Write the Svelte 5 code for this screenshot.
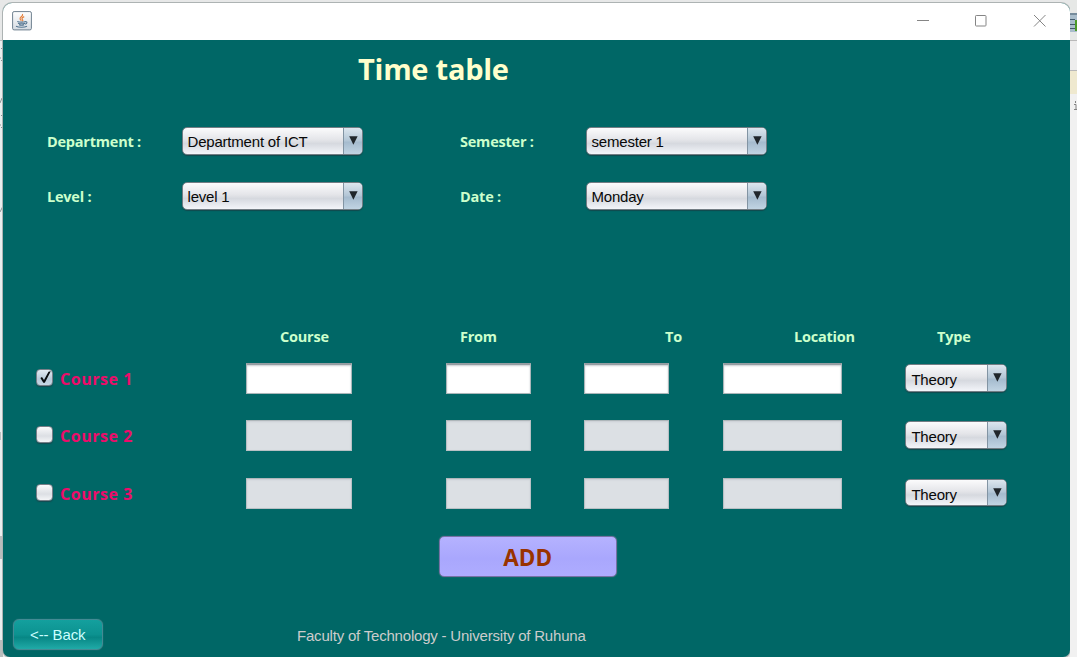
<script>
  const filters = [
    { label: 'Department :', value: 'Department of ICT' },
    { label: 'Semester :', value: 'semester 1' },
    { label: 'Level :', value: 'level 1' },
    { label: 'Date :', value: 'Monday' }
  ];
  const rows = [
    { name: 'Course 1', on: true },
    { name: 'Course 2', on: false },
    { name: 'Course 3', on: false }
  ];
</script>

{#snippet combo(value)}
  <div class="combo">
    <span class="value">{value}</span>
    <span class="arrow"><svg width="9" height="9" viewBox="0 0 9 9"><path d="M0.2 0.3h8.4L4.4 8.7z" fill="#20262b" /></svg></span>
  </div>
{/snippet}

<div class="desktop">
  <div class="side left">
    <svg width="3" height="657" viewBox="0 0 3 657">
      <path d="M0 41h3v616H0z" fill="#e9eeee" />
      <path d="M0 40.5h3" stroke="#bcbcbc" />
      <path d="M0 536h3v23H0zM0 640h3v17H0z" fill="#b9bdbd" />
      <path d="M0 58h1M1 60.5h2M1 48.5h1M0 103l2-5M1 115.5h2M0 125h1M1 127.5h2M0 212l3-6M0 432v8" stroke="#8a9292" fill="none" />
    </svg>
  </div>
  <main class="window">
    <header class="titlebar">
      <svg class="java" width="20" height="20" viewBox="0 0 20 20">
        <defs><linearGradient id="tile" x2="0" y2="1"><stop stop-color="#fff" /><stop offset="1" stop-color="#d5dbe2" /></linearGradient></defs>
        <rect x=".6" y=".6" width="18.8" height="18.3" rx="1.5" fill="url(#tile)" stroke="#6f8190" />
        <path d="M10.5 3c1.2 2.500-3.200 3-2.400 5 .3.8 1 1.200 1.300 1.800M12.200 5.600c-3 1.200-2.400 2.200-1.500 3.400.3.5 0 .9-.4 1.200" fill="none" stroke="#e5813e" stroke-width="1.2" />
        <path d="M5.300 10.500c2 .8 6.500.8 8.400 0M6 12.200c2 .7 5 .7 7 0M7 13.800c1.600.6 3.600.6 5.200 0M13.400 10.700c2.300-.3 1.900 2-.4 2.500M4 15.300c2.500 1.300 8.500 1.300 11 0" fill="none" stroke="#557692" stroke-width="1.1" />
      </svg>
      <svg class="controls" width="134" height="14" viewBox="0 0 134 14" fill="none" stroke="#858585">
        <path d="M1 7.500h12" /><rect x="59.500" y="2.500" width="10.500" height="10.500" rx=".8" /><path d="M118 2l11.500 11.500M129.500 2L118 13.500" />
      </svg>
    </header>
    <section class="content">
      <h1>Time table</h1>
      <div class="filters">
        {#each filters as f}
          <span class="cap">{f.label}</span>
          {@render combo(f.value)}
        {/each}
      </div>
      <div class="heads">
        <span>Course</span><span>From</span><span>To</span><span>Location</span><span>Type</span>
      </div>
      <div class="rows">
        {#each rows as r}
          <div class="row">
            <div class="check">
              <span class="box" class:on={r.on}>
                {#if r.on}<svg width="16" height="16" viewBox="0 0 16 16"><path d="M3.400 7.900l1.600-.9 2 2.900L11.500 1.700l2.300-.5L7.800 12.800H6.300z" fill="#080b0e" /></svg>{/if}
              </span>
              <span class="name">{r.name}</span>
            </div>
            <div class="field" class:off={!r.on}></div>
            <div class="field" class:off={!r.on}></div>
            <div class="field" class:off={!r.on}></div>
            <div class="field" class:off={!r.on}></div>
            {@render combo('Theory')}
          </div>
        {/each}
      </div>
      <button class="add">ADD</button>
      <footer>
        <button class="back">&lt;-- Back</button>
        <span>Faculty of Technology - University of Ruhuna</span>
      </footer>
    </section>
  </main>
  <div class="side right">
    <svg width="7" height="657" viewBox="0 0 7 657">
      <path d="M0 0h7v40H0z" fill="#e6e8e6" /><path d="M0 40h7v30H0z" fill="#ededed" />
      <path d="M0 40.500h7M0 70.500h7" stroke="#b9b9b9" />
      <path d="M0 71h7v23H0z" fill="#efe9cf" /><path d="M0 94h7v563H0z" fill="#f1f1f1" />
      <path d="M0 13h7v19H0z" fill="#a9bdcb" /><path d="M0 14h7M0 19.500h5M0 24.500h5M0 28.500h5" stroke="#435b6c" /><path d="M5 20h2v11H5z" fill="#4b9b28" />
      <path d="M5.500 101v2M4 104.500h2v5M4 109.500h3" stroke="#858585" fill="none" />
    </svg>
  </div>
</div>

<style>
  :global(body) { margin: 0; overflow: hidden; }
  .desktop { display: flex; width: 1077px; height: 657px; background: #e7e8e8; font-family: "Liberation Sans", Arial, sans-serif; }
  .side svg { display: block; }
  .left { width: 3px; }
  .right { width: 7px; }
  .window { width: 1067px; height: 654px; margin-top: 3px; border-radius: 9px 9px 7px 7px; background: #006766; box-shadow: 0 0 0 1px #adb3b3; overflow: hidden; }
  .titlebar { height: 37px; background: #fff; display: flex; justify-content: space-between; box-sizing: border-box; padding: 8px 20px 0 9px; }
  .controls { margin-top: 2px; }
  .content { height: 617px; display: flex; flex-direction: column; }
  h1 { margin: 8px 0 0 355px; height: 43px; font: 700 29px/42px "Open Sans", sans-serif; color: #ffffcc; letter-spacing: -.25px; }
  .filters { display: grid; grid-template-columns: 134.500px 278.500px 125.500px 181px; grid-template-rows: 28px 28px; row-gap: 27px; margin: 36px 0 0 44px; }
  .filters .combo { width: 181.500px; }
  .cap, .heads { font: 700 14.500px/29px "Open Sans", sans-serif; letter-spacing: -.22px; color: #ccffcc; white-space: nowrap; }
  .combo { height: 27.500px; display: flex; box-sizing: border-box; border: 1px solid #737d84; border-radius: 5px; overflow: hidden; background: linear-gradient(#fbfbfc, #e4e5e9 45%, #d6d9df 60%, #f3f5f9); box-shadow: 0 1px 1px #12494d; }
  .value { flex: 1; padding-left: 5px; font-size: 15px; line-height: 28px; letter-spacing: -.2px; color: #080808; white-space: nowrap; }
  .arrow { width: 19px; box-sizing: border-box; border-left: 1px solid #8294a3; background: linear-gradient(#dce6ee, #b3c6d6 48%, #a5bbce 55%, #c1d4e3); padding: 8px 0 0 5px; }
  .arrow svg { display: block; }
  .heads { display: grid; grid-template-columns: 180px 205px 129px 143px auto; margin: 112px 0 0 277px; height: 28px; }
  .rows { display: flex; flex-direction: column; gap: 26.300px; margin: 13px 0 0 33px; }
  .row { display: grid; grid-template-columns: 210px 200px 138.400px 139px 182px 102px; height: 31px; }
  .field { height: 31px; width: 106px; box-sizing: border-box; background: #fff; border: 1px solid #aab6b9; border-top: 2px solid #969ea3; box-shadow: inset 0 1px 2px #c8ccd0; }
  .field:nth-child(3), .field:nth-child(4) { width: 85px; }
  .field:nth-child(5) { width: 119px; margin-left: -.4px; }
  .off { background: #dce0e4; border: 1px solid #b8c0c4; border-top-color: #aeb6ba; box-shadow: inset 0 1px 2px #cbcfd4; }
  .row .combo { margin: 1px 0 0 -.5px; }
  .row .value { line-height: 29px; padding-left: 5.500px; }
  .check { display: flex; margin-left: -.5px; }
  .box { width: 17px; height: 17px; margin-top: 6px; box-sizing: border-box; border: 1px solid #777f88; border-radius: 4px; background: linear-gradient(#fafafb, #dcdfe4 60%, #f4f5f7); box-shadow: 0 1px 1px #164a50; }
  .box.on { background: linear-gradient(#e3ebf3, #b9cad9 60%, #c7d8e6); }
  .box svg { display: block; }
  .name { margin-left: 7.500px; font: 700 16px/32px "Open Sans", sans-serif; letter-spacing: .55px; color: #ec0c6a; white-space: nowrap; }
  button { padding: 0; box-sizing: border-box; }
  .add { width: 177.500px; height: 41px; margin: 27px 0 0 436px; border: 1px solid #7771a5; border-radius: 5px; background: linear-gradient(#b5b2ff, #a9a7fd 55%, #aeacff); font: 700 22.500px/41px "Open Sans", sans-serif; color: #993300; box-shadow: 0 0 1px #7d8990; }
  footer { display: flex; margin: 42px 0 0 9.500px; height: 31px; font-size: 15px; line-height: 33px; color: #ccc; }
  footer span { margin-left: 194px; letter-spacing: -.2px; white-space: nowrap; }
  .back { width: 90.500px; height: 31px; border: 1px solid #438b94; border-radius: 6px; background: linear-gradient(#14a09e, #0c9290 50%, #078785 60%, #20aaa7); color: #ccffff; font: 15px/30px "Liberation Sans", sans-serif; letter-spacing: -.1px; box-shadow: 0 0 1px #61858c; }
</style>
